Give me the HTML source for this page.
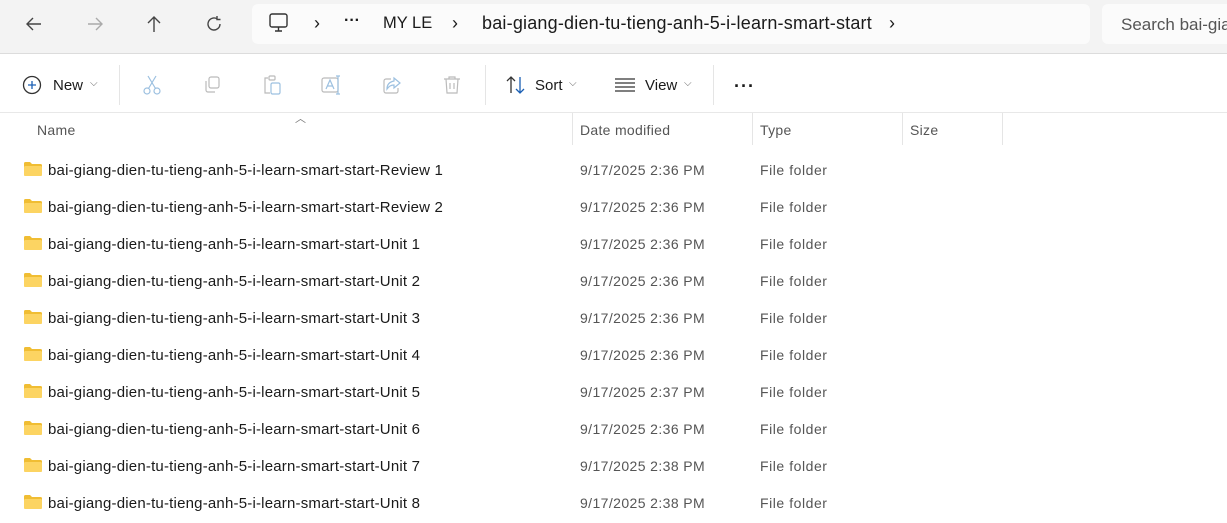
<!DOCTYPE html>
<html><head><meta charset="utf-8"><style>
*{margin:0;padding:0;box-sizing:border-box}
body{width:1227px;height:523px;overflow:hidden;background:#fff;font-family:"Liberation Sans",sans-serif;color:#1a1a1a;position:relative}
.top{position:absolute;left:0;top:0;width:1227px;height:54px;background:#f3f3f3;border-bottom:1px solid #dcdcdc}
.addr{position:absolute;left:252px;top:4px;width:838px;height:40px;background:#fbfbfb;border-radius:6px}
.search{position:absolute;left:1102px;top:4px;width:140px;height:40px;background:#fbfbfb;border-radius:6px;font-size:17px;color:#555;padding:11px 0 0 19px;white-space:nowrap}
.t{position:absolute;white-space:nowrap}
.sep{position:absolute;top:65px;width:1px;height:40px;background:#e5e5e5}
.hdr{position:absolute;top:112px;left:0;width:1227px;height:1px;background:#e8e8e8}
.col{position:absolute;top:113px;width:1px;height:32px;background:#e5e5e5}
.h{position:absolute;top:122px;font-size:14px;color:#555;letter-spacing:0.3px}
.row{position:absolute;left:0;height:37px;width:1227px;font-size:15px}
.row span{position:absolute;top:11px;white-space:nowrap}
.row span.n{letter-spacing:0.2px}
.row span.d{font-size:14px;letter-spacing:0.4px;color:#555;top:11px}
.row span.y{font-size:14px;letter-spacing:0.55px;color:#555;top:11px}
.fold{position:absolute;left:24px;top:11px;width:18px;height:14px}
</style></head><body>
<div class="top"></div>
<svg class="t" style="left:24px;top:14px" width="20" height="20" viewBox="0 0 20 20" fill="none" stroke="#444" stroke-width="1.4"><path d="M17 10H3M9 4L3 10L9 16"/></svg>
<svg class="t" style="left:85px;top:14px" width="20" height="20" viewBox="0 0 20 20" fill="none" stroke="#aaa" stroke-width="1.4"><path d="M3 10H17M11 4L17 10L11 16"/></svg>
<svg class="t" style="left:144px;top:14px" width="20" height="20" viewBox="0 0 20 20" fill="none" stroke="#444" stroke-width="1.4"><path d="M10 18V3M4 9L10 3L16 9"/></svg>
<svg class="t" style="left:204px;top:14px" width="20" height="20" viewBox="0 0 20 20" fill="none" stroke="#444" stroke-width="1.4"><path d="M16 10A6 6 0 1 1 13 4.8M13 2V5.5H16.5"/></svg>
<div class="addr"></div>
<svg class="t" style="left:268px;top:13px" width="22" height="20" viewBox="0 0 22 20" fill="none" stroke="#333" stroke-width="1.4"><rect x="2" y="1" width="17" height="13" rx="2"/><path d="M7 18H14M10.5 14V18"/></svg>
<div class="t" style="left:314px;top:13px;font-size:18px">›</div>
<div class="t" style="left:344px;top:12px;font-size:16px;font-weight:bold">···</div>
<div class="t" style="left:383px;top:14px;font-size:16.5px">MY LE</div>
<div class="t" style="left:452px;top:13px;font-size:18px">›</div>
<div class="t" style="left:482px;top:13px;font-size:18px;letter-spacing:0.2px">bai-giang-dien-tu-tieng-anh-5-i-learn-smart-start</div>
<div class="t" style="left:889px;top:13px;font-size:18px">›</div>
<div class="search">Search bai-gia</div>

<svg class="t" style="left:22px;top:75px" width="20" height="20" viewBox="0 0 20 20" fill="none" stroke-width="1.3"><circle cx="10" cy="10" r="8.5" stroke="#333"/><path d="M10 6V14M6 10H14" stroke="#1a5fb4"/></svg>
<div class="t" style="left:53px;top:77px;font-size:15px">New</div>
<div class="t" style="left:90px;top:78px;font-size:10px;color:#666">⌵</div>
<div class="sep" style="left:119px"></div>
<svg class="t" style="left:142px;top:74px" width="20" height="22" viewBox="0 0 20 22" fill="none" stroke="#9cc0e0" stroke-width="1.2"><circle cx="5" cy="17" r="3"/><circle cx="15" cy="17" r="3"/><path d="M6.5 14.5L14 2M13.5 14.5L6 2"/></svg>
<svg class="t" style="left:202px;top:75px" width="20" height="20" viewBox="0 0 20 20" fill="none" stroke="#bbb" stroke-width="1.2"><rect x="7" y="2" width="10" height="11" rx="2"/><path d="M4 6V15A2 2 0 0 0 6 17H13"/></svg>
<svg class="t" style="left:262px;top:74px" width="20" height="22" viewBox="0 0 20 22" fill="none" stroke="#bbb" stroke-width="1.2"><path d="M6 4H3V19H8"/><rect x="7" y="2" width="6" height="4" rx="1"/><rect x="9" y="9" width="9" height="11" rx="1.5" stroke="#9cc0e0"/></svg>
<svg class="t" style="left:321px;top:75px" width="22" height="20" viewBox="0 0 22 20" fill="none" stroke="#9cc0e0" stroke-width="1.2"><rect x="1" y="3" width="16" height="14" rx="2" stroke="#bbb"/><path d="M5 14L9 5L13 14M6.5 11H11.5M17 1V19M15 1H19M15 19H19"/></svg>
<svg class="t" style="left:382px;top:75px" width="20" height="20" viewBox="0 0 20 20" fill="none" stroke="#9cc0e0" stroke-width="1.2"><path d="M9 4H4A2 2 0 0 0 2 6V16A2 2 0 0 0 4 18H14A2 2 0 0 0 16 16V13" stroke="#bbb"/><path d="M12 3L18 8L12 13V10C9 10 7 11 5 14C5 10 7 7 12 6Z"/></svg>
<svg class="t" style="left:442px;top:75px" width="20" height="20" viewBox="0 0 20 20" fill="none" stroke="#bbb" stroke-width="1.2"><path d="M2 4H18M7 4V2H13V4M4 4L5 18H15L16 4M8 8V14M12 8V14"/></svg>
<div class="sep" style="left:485px"></div>
<svg class="t" style="left:505px;top:75px" width="22" height="20" viewBox="0 0 22 20" fill="none" stroke-width="1.3"><path d="M6 18V2M2 6L6 2L10 6" stroke="#333"/><path d="M15 2V18M11 14L15 18L19 14" stroke="#1a5fb4"/></svg>
<div class="t" style="left:535px;top:77px;font-size:15px">Sort</div>
<div class="t" style="left:569px;top:78px;font-size:10px;color:#666">⌵</div>
<svg class="t" style="left:614px;top:77px" width="22" height="16" viewBox="0 0 22 16" fill="none" stroke="#333" stroke-width="1.3"><path d="M1 2H21M1 6H21M1 10H21M1 14H21"/></svg>
<div class="t" style="left:645px;top:77px;font-size:15px">View</div>
<div class="t" style="left:684px;top:78px;font-size:10px;color:#666">⌵</div>
<div class="sep" style="left:713px"></div>
<div class="t" style="left:734px;top:76px;font-size:18px;font-weight:bold;letter-spacing:1px">···</div>

<div class="hdr"></div>
<div class="t" style="left:295px;top:110px;font-size:11px;color:#777">︿</div>
<div class="h" style="left:37px">Name</div>
<div class="col" style="left:572px"></div><div class="h" style="left:580px">Date modified</div>
<div class="col" style="left:752px"></div><div class="h" style="left:760px">Type</div>
<div class="col" style="left:902px"></div><div class="h" style="left:910px">Size</div>
<div class="col" style="left:1002px"></div>

<div class="row" style="top:151px"><svg class="fold" viewBox="0 0 18 14"><path d="M0 1.5A1.5 1.5 0 0 1 1.5 0H6L8 2H16.5A1.5 1.5 0 0 1 18 3.5V12.5A1.5 1.5 0 0 1 16.5 14H1.5A1.5 1.5 0 0 1 0 12.5Z" fill="#f0bd33"/><rect x="0" y="4" width="18" height="10" rx="1.5" fill="#fcd462"/></svg><span class="n" style="left:48px">bai-giang-dien-tu-tieng-anh-5-i-learn-smart-start-Review 1</span><span class="d" style="left:580px">9/17/2025 2:36 PM</span><span class="y" style="left:760px">File folder</span></div>
<div class="row" style="top:188px"><svg class="fold" viewBox="0 0 18 14"><path d="M0 1.5A1.5 1.5 0 0 1 1.5 0H6L8 2H16.5A1.5 1.5 0 0 1 18 3.5V12.5A1.5 1.5 0 0 1 16.5 14H1.5A1.5 1.5 0 0 1 0 12.5Z" fill="#f0bd33"/><rect x="0" y="4" width="18" height="10" rx="1.5" fill="#fcd462"/></svg><span class="n" style="left:48px">bai-giang-dien-tu-tieng-anh-5-i-learn-smart-start-Review 2</span><span class="d" style="left:580px">9/17/2025 2:36 PM</span><span class="y" style="left:760px">File folder</span></div>
<div class="row" style="top:225px"><svg class="fold" viewBox="0 0 18 14"><path d="M0 1.5A1.5 1.5 0 0 1 1.5 0H6L8 2H16.5A1.5 1.5 0 0 1 18 3.5V12.5A1.5 1.5 0 0 1 16.5 14H1.5A1.5 1.5 0 0 1 0 12.5Z" fill="#f0bd33"/><rect x="0" y="4" width="18" height="10" rx="1.5" fill="#fcd462"/></svg><span class="n" style="left:48px">bai-giang-dien-tu-tieng-anh-5-i-learn-smart-start-Unit 1</span><span class="d" style="left:580px">9/17/2025 2:36 PM</span><span class="y" style="left:760px">File folder</span></div>
<div class="row" style="top:262px"><svg class="fold" viewBox="0 0 18 14"><path d="M0 1.5A1.5 1.5 0 0 1 1.5 0H6L8 2H16.5A1.5 1.5 0 0 1 18 3.5V12.5A1.5 1.5 0 0 1 16.5 14H1.5A1.5 1.5 0 0 1 0 12.5Z" fill="#f0bd33"/><rect x="0" y="4" width="18" height="10" rx="1.5" fill="#fcd462"/></svg><span class="n" style="left:48px">bai-giang-dien-tu-tieng-anh-5-i-learn-smart-start-Unit 2</span><span class="d" style="left:580px">9/17/2025 2:36 PM</span><span class="y" style="left:760px">File folder</span></div>
<div class="row" style="top:299px"><svg class="fold" viewBox="0 0 18 14"><path d="M0 1.5A1.5 1.5 0 0 1 1.5 0H6L8 2H16.5A1.5 1.5 0 0 1 18 3.5V12.5A1.5 1.5 0 0 1 16.5 14H1.5A1.5 1.5 0 0 1 0 12.5Z" fill="#f0bd33"/><rect x="0" y="4" width="18" height="10" rx="1.5" fill="#fcd462"/></svg><span class="n" style="left:48px">bai-giang-dien-tu-tieng-anh-5-i-learn-smart-start-Unit 3</span><span class="d" style="left:580px">9/17/2025 2:36 PM</span><span class="y" style="left:760px">File folder</span></div>
<div class="row" style="top:336px"><svg class="fold" viewBox="0 0 18 14"><path d="M0 1.5A1.5 1.5 0 0 1 1.5 0H6L8 2H16.5A1.5 1.5 0 0 1 18 3.5V12.5A1.5 1.5 0 0 1 16.5 14H1.5A1.5 1.5 0 0 1 0 12.5Z" fill="#f0bd33"/><rect x="0" y="4" width="18" height="10" rx="1.5" fill="#fcd462"/></svg><span class="n" style="left:48px">bai-giang-dien-tu-tieng-anh-5-i-learn-smart-start-Unit 4</span><span class="d" style="left:580px">9/17/2025 2:36 PM</span><span class="y" style="left:760px">File folder</span></div>
<div class="row" style="top:373px"><svg class="fold" viewBox="0 0 18 14"><path d="M0 1.5A1.5 1.5 0 0 1 1.5 0H6L8 2H16.5A1.5 1.5 0 0 1 18 3.5V12.5A1.5 1.5 0 0 1 16.5 14H1.5A1.5 1.5 0 0 1 0 12.5Z" fill="#f0bd33"/><rect x="0" y="4" width="18" height="10" rx="1.5" fill="#fcd462"/></svg><span class="n" style="left:48px">bai-giang-dien-tu-tieng-anh-5-i-learn-smart-start-Unit 5</span><span class="d" style="left:580px">9/17/2025 2:37 PM</span><span class="y" style="left:760px">File folder</span></div>
<div class="row" style="top:410px"><svg class="fold" viewBox="0 0 18 14"><path d="M0 1.5A1.5 1.5 0 0 1 1.5 0H6L8 2H16.5A1.5 1.5 0 0 1 18 3.5V12.5A1.5 1.5 0 0 1 16.5 14H1.5A1.5 1.5 0 0 1 0 12.5Z" fill="#f0bd33"/><rect x="0" y="4" width="18" height="10" rx="1.5" fill="#fcd462"/></svg><span class="n" style="left:48px">bai-giang-dien-tu-tieng-anh-5-i-learn-smart-start-Unit 6</span><span class="d" style="left:580px">9/17/2025 2:36 PM</span><span class="y" style="left:760px">File folder</span></div>
<div class="row" style="top:447px"><svg class="fold" viewBox="0 0 18 14"><path d="M0 1.5A1.5 1.5 0 0 1 1.5 0H6L8 2H16.5A1.5 1.5 0 0 1 18 3.5V12.5A1.5 1.5 0 0 1 16.5 14H1.5A1.5 1.5 0 0 1 0 12.5Z" fill="#f0bd33"/><rect x="0" y="4" width="18" height="10" rx="1.5" fill="#fcd462"/></svg><span class="n" style="left:48px">bai-giang-dien-tu-tieng-anh-5-i-learn-smart-start-Unit 7</span><span class="d" style="left:580px">9/17/2025 2:38 PM</span><span class="y" style="left:760px">File folder</span></div>
<div class="row" style="top:484px"><svg class="fold" viewBox="0 0 18 14"><path d="M0 1.5A1.5 1.5 0 0 1 1.5 0H6L8 2H16.5A1.5 1.5 0 0 1 18 3.5V12.5A1.5 1.5 0 0 1 16.5 14H1.5A1.5 1.5 0 0 1 0 12.5Z" fill="#f0bd33"/><rect x="0" y="4" width="18" height="10" rx="1.5" fill="#fcd462"/></svg><span class="n" style="left:48px">bai-giang-dien-tu-tieng-anh-5-i-learn-smart-start-Unit 8</span><span class="d" style="left:580px">9/17/2025 2:38 PM</span><span class="y" style="left:760px">File folder</span></div>
</body></html>
